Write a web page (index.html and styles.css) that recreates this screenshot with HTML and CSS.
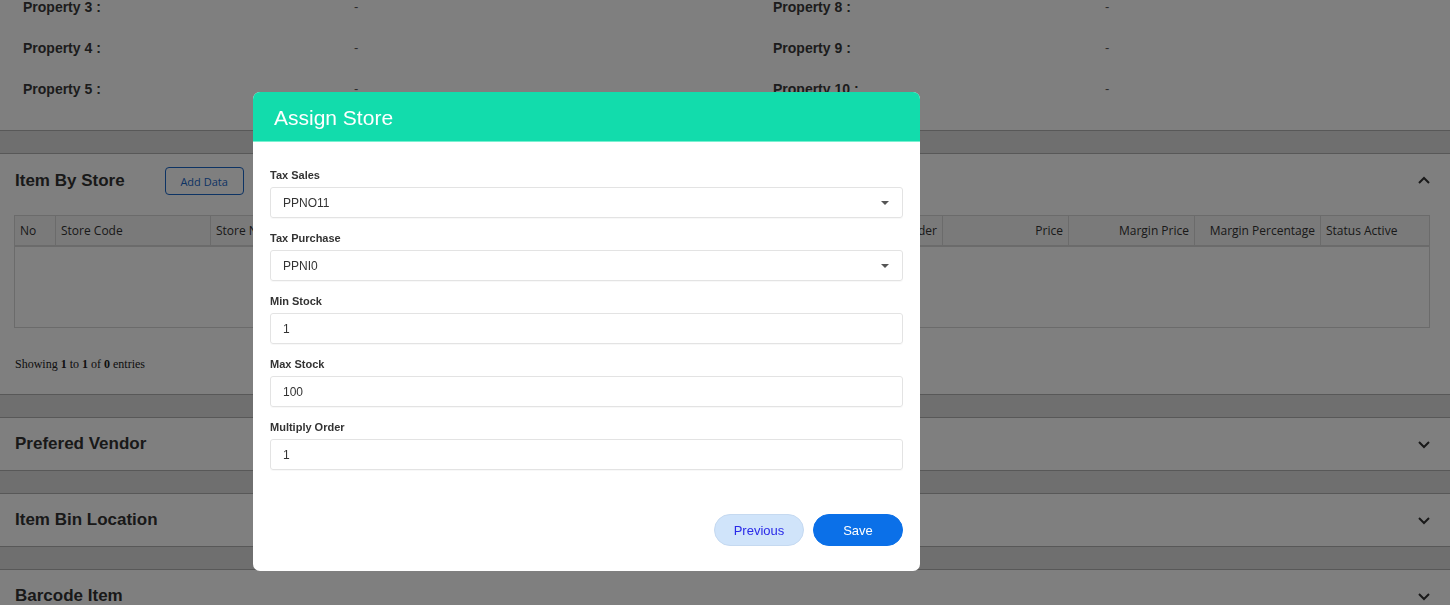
FILE: index.html
```html
<!DOCTYPE html>
<html>
<head>
<meta charset="utf-8">
<link rel="stylesheet" href="styles.css">
</head>
<body>
<div class="page">
  <section class="card props">
    <div class="prop-grid">
      <div class="prop-col">
        <div class="prop-row"><span class="prop-label">Property 3 :</span><span class="prop-val">-</span></div>
        <div class="prop-row"><span class="prop-label">Property 4 :</span><span class="prop-val">-</span></div>
        <div class="prop-row"><span class="prop-label">Property 5 :</span><span class="prop-val">-</span></div>
      </div>
      <div class="prop-col">
        <div class="prop-row"><span class="prop-label">Property 8 :</span><span class="prop-val">-</span></div>
        <div class="prop-row"><span class="prop-label">Property 9 :</span><span class="prop-val">-</span></div>
        <div class="prop-row"><span class="prop-label">Property 10 :</span><span class="prop-val">-</span></div>
      </div>
    </div>
  </section>

  <section class="card store">
    <div class="card-head">
      <h2 class="card-title">Item By Store</h2>
      <button class="btn-add">Add Data</button>
      <svg class="chev" width="14" height="9" viewBox="0 0 14 9"><path d="M2 7 L7 2 L12 7" fill="none" stroke="#333" stroke-width="2"/></svg>
    </div>
    <table class="tbl">
      <thead>
        <tr>
          <th class="c-no">No</th>
          <th class="c-code">Store Code</th>
          <th>Store Name</th>
          <th>Tax Sales</th>
          <th>Tax Purchase</th>
          <th>Min Stock</th>
          <th>Max Stock</th>
          <th class="num">Multiply Order</th>
          <th class="num c-w">Price</th>
          <th class="num c-w">Margin Price</th>
          <th class="num c-w">Margin Percentage</th>
          <th class="c-st">Status Active</th>
        </tr>
      </thead>
      <tbody>
        <tr class="empty"><td colspan="12"></td></tr>
      </tbody>
    </table>
    <p class="info">Showing <b>1</b> to <b>1</b> of <b>0</b> entries</p>
  </section>

  <section class="card collapsed">
    <div class="card-head">
      <h2 class="card-title">Prefered Vendor</h2>
      <svg class="chev" width="14" height="9" viewBox="0 0 14 9"><path d="M2 2 L7 7 L12 2" fill="none" stroke="#333" stroke-width="2"/></svg>
    </div>
  </section>

  <section class="card collapsed">
    <div class="card-head">
      <h2 class="card-title">Item Bin Location</h2>
      <svg class="chev" width="14" height="9" viewBox="0 0 14 9"><path d="M2 2 L7 7 L12 2" fill="none" stroke="#333" stroke-width="2"/></svg>
    </div>
  </section>

  <section class="card collapsed">
    <div class="card-head">
      <h2 class="card-title">Barcode Item</h2>
      <svg class="chev" width="14" height="9" viewBox="0 0 14 9"><path d="M2 2 L7 7 L12 2" fill="none" stroke="#333" stroke-width="2"/></svg>
    </div>
  </section>
</div>

<div class="overlay"></div>

<div class="modal">
  <div class="modal-head">
    <h1 class="modal-title">Assign Store</h1>
  </div>
  <div class="modal-body">
    <div class="field">
      <label class="f-label">Tax Sales</label>
      <div class="f-input select"><span>PPNO11</span><i class="caret"></i></div>
    </div>
    <div class="field">
      <label class="f-label">Tax Purchase</label>
      <div class="f-input select"><span>PPNI0</span><i class="caret"></i></div>
    </div>
    <div class="field">
      <label class="f-label">Min Stock</label>
      <div class="f-input"><span>1</span></div>
    </div>
    <div class="field">
      <label class="f-label">Max Stock</label>
      <div class="f-input"><span>100</span></div>
    </div>
    <div class="field">
      <label class="f-label">Multiply Order</label>
      <div class="f-input"><span>1</span></div>
    </div>
    <div class="actions">
      <button class="btn btn-prev">Previous</button>
      <button class="btn btn-save">Save</button>
    </div>
  </div>
</div>
</body>
</html>
```

FILE: styles.css
```css
* { box-sizing: border-box; }
html, body { margin: 0; padding: 0; }
body {
  background: #dedede;
  font-family: "Liberation Sans", Arial, sans-serif;
  color: #333;
  width: 1450px;
  height: 605px;
  overflow: hidden;
}
.page {
  display: flex;
  flex-direction: column;
  gap: 22px;
  margin-top: -14px;
}
.card {
  background: #fff;
  border-top: 1px solid #b0b0b0;
  border-bottom: 1px solid #b0b0b0;
}
.props { padding: 0 0 21px 0; border-top: none; }
.prop-grid { display: grid; grid-template-columns: 750px 700px; }
.prop-row {
  display: flex;
  height: 41px;
  align-items: center;
  font-size: 14px;
}
.prop-label { width: 354px; padding-left: 23px; font-weight: 700; color: #383838; }
.prop-col:nth-child(2) .prop-label { width: 355px; }
.prop-val { color: #555; font-size: 13px; }

.card-head {
  display: flex;
  align-items: center;
  padding: 0 19px 0 15px;
  height: 53px;
}
.card-title {
  margin: 0;
  font-size: 17px;
  font-weight: 700;
  color: #333;
}
.btn-add {
  margin-left: 40px;
  height: 28px;
  width: 79px;
  border: 1px solid #1a66c8;
  border-radius: 4px;
  background: transparent;
  color: #1a66c8;
  font-family: "Open Sans", "Liberation Sans", sans-serif;
  font-size: 11px;
  padding: 0;
  margin-top: 1px;
}
.chev { margin-left: auto; }

.tbl {
  margin: 8px 0 0 14px;
  width: 1416px;
  border-collapse: collapse;
  font-family: "Open Sans", "Liberation Sans", sans-serif;
  font-size: 12px;
  color: #333;
  table-layout: fixed;
  border: 1px solid #d6d6d6;
}
.tbl th {
  background: #f5f5f5;
  font-weight: 400;
  text-align: left;
  height: 30px;
  padding: 0 5px;
  border-left: 1px solid #d6d6d6;
  border-bottom: 2px solid #d6d6d6;
  white-space: nowrap;
  overflow: hidden;
}
.tbl th.num { text-align: right; }
.c-no { width: 41px; }
.c-code { width: 155px; }
.c-w { width: 126px; }
.c-st { width: 109px; }
.tbl .empty td { height: 82px; }
.info {
  margin: 29px 0 0 15px;
  font-family: "Liberation Serif", "Times New Roman", serif;
  font-size: 12px;
  color: #222;
}
.store { height: 242px; }
.collapsed .card-head { height: 52px; }

.overlay {
  position: fixed;
  inset: 0;
  background: rgba(0, 0, 0, 0.5);
}

.modal {
  position: absolute;
  left: 253px;
  top: 92px;
  width: 667px;
  height: 479px;
  background: #fff;
  border-radius: 7px;
  overflow: hidden;
  display: flex;
  flex-direction: column;
}
.modal-head {
  background: #12dcac;
  height: 50px;
  display: flex;
  align-items: center;
  padding: 2px 0 0 21px;
  border-bottom: 1px solid #7af0d0;
}
.modal-title {
  margin: 0;
  font-size: 21px;
  font-weight: 400;
  color: #fff;
}
.modal-body {
  padding: 26px 17px 25px 17px;
  display: flex;
  flex-direction: column;
  flex: 1;
}
.field { display: flex; flex-direction: column; margin-bottom: 13px; }
.f-label {
  font-size: 11px;
  font-weight: 700;
  color: #333;
  line-height: 14px;
  margin-bottom: 5px;
}
.f-input {
  height: 31px;
  border: 1px solid #e3e3e3;
  border-radius: 3px;
  display: flex;
  align-items: center;
  padding: 0 13px 0 12px;
  font-size: 12px;
  color: #333;
  box-shadow: 0 1px 1px rgba(0,0,0,0.03);
}
.caret {
  margin-left: auto;
  width: 0;
  height: 0;
  border-left: 4px solid transparent;
  border-right: 4px solid transparent;
  border-top: 4px solid #555;
}
.actions {
  margin-top: auto;
  display: flex;
  justify-content: flex-end;
  gap: 9px;
}
.btn {
  width: 90px;
  height: 32px;
  border-radius: 16px;
  font-family: "Liberation Sans", Arial, sans-serif;
  font-size: 13px;
  padding: 0;
}
.btn-prev {
  background: #d0e4fa;
  color: #2a2ae8;
  border: 1px solid #c5d9f0;
}
.btn-save {
  background: #0b70e8;
  color: #fff;
  border: 1px solid #0b70e8;
}
```
